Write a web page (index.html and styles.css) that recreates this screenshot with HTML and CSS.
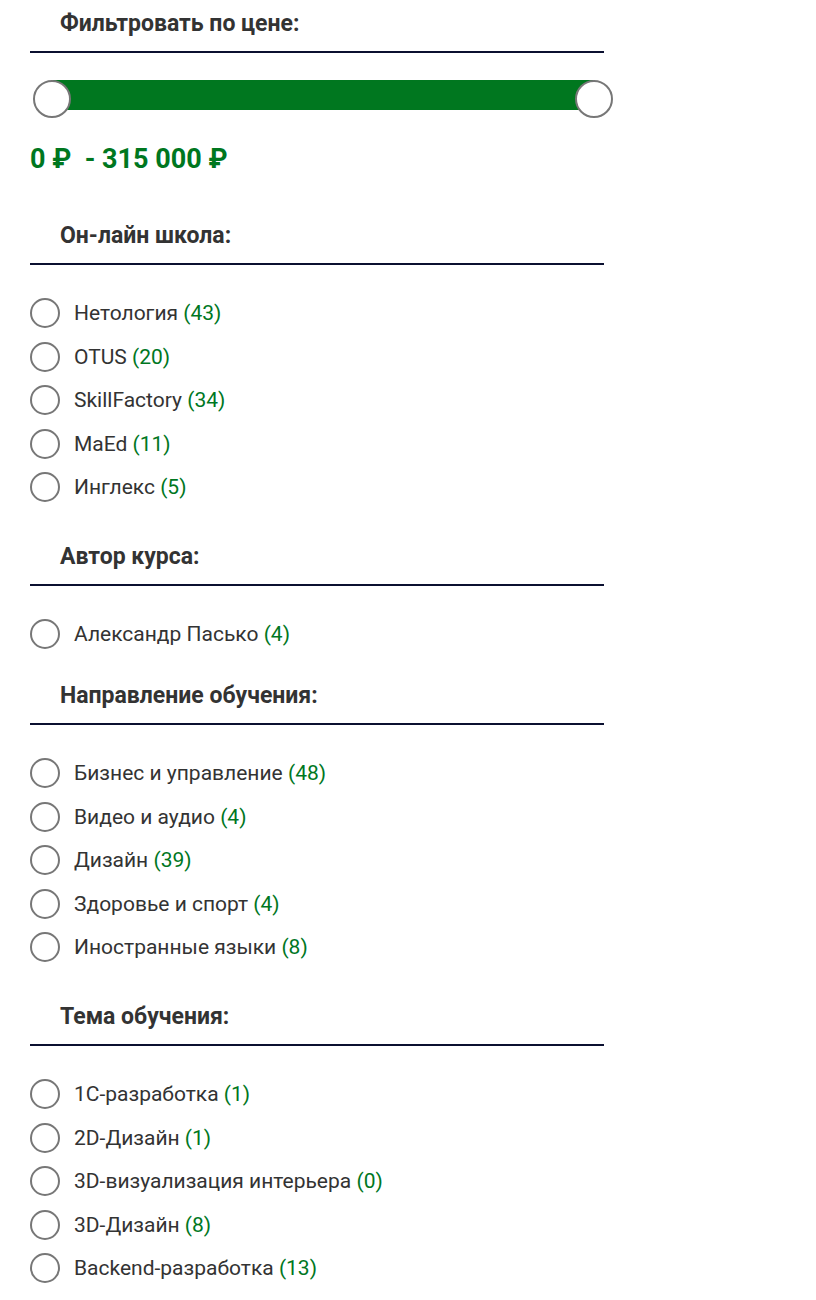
FILE: index.html
```html
<!DOCTYPE html>
<html lang="ru">
<head>
    <meta charset="UTF-8">
    <meta name="viewport" content="width=device-width, initial-scale=1.0">
    <title>Фильтр курсов</title>
    <link rel="stylesheet" href="styles.css">
</head>
<body>
    <div class="filters">
        <div class="filter-group">
            <h3 class="filter-title">Фильтровать по цене:</h3>
            <div class="price-slider">
                <div class="price-bar"></div>
                <span class="price-handle handle-min"></span>
                <span class="price-handle handle-max"></span>
            </div>
            <div class="price-range">0 ₽ &nbsp;- 315 000 ₽</div>
        </div>

        <div class="filter-group group-wide">
            <h3 class="filter-title">Он-лайн школа:</h3>
            <ul class="filter-list">
                <li><span class="radio"></span>Нетология <span class="count">(43)</span></li>
                <li><span class="radio"></span>OTUS <span class="count">(20)</span></li>
                <li><span class="radio"></span>SkillFactory <span class="count">(34)</span></li>
                <li><span class="radio"></span>MaEd <span class="count">(11)</span></li>
                <li><span class="radio"></span>Инглекс <span class="count">(5)</span></li>
            </ul>
        </div>

        <div class="filter-group">
            <h3 class="filter-title">Автор курса:</h3>
            <ul class="filter-list">
                <li><span class="radio"></span>Александр Пасько <span class="count">(4)</span></li>
            </ul>
        </div>

        <div class="filter-group group-near">
            <h3 class="filter-title">Направление обучения:</h3>
            <ul class="filter-list">
                <li><span class="radio"></span>Бизнес и управление <span class="count">(48)</span></li>
                <li><span class="radio"></span>Видео и аудио <span class="count">(4)</span></li>
                <li><span class="radio"></span>Дизайн <span class="count">(39)</span></li>
                <li><span class="radio"></span>Здоровье и спорт <span class="count">(4)</span></li>
                <li><span class="radio"></span>Иностранные языки <span class="count">(8)</span></li>
            </ul>
        </div>

        <div class="filter-group">
            <h3 class="filter-title">Тема обучения:</h3>
            <ul class="filter-list">
                <li><span class="radio"></span>1С-разработка <span class="count">(1)</span></li>
                <li><span class="radio"></span>2D-Дизайн <span class="count">(1)</span></li>
                <li><span class="radio"></span>3D-визуализация интерьера <span class="count">(0)</span></li>
                <li><span class="radio"></span>3D-Дизайн <span class="count">(8)</span></li>
                <li><span class="radio"></span>Backend-разработка <span class="count">(13)</span></li>
            </ul>
        </div>
    </div>
</body>
</html>
```

FILE: styles.css
```css
body {
    margin: 0;
    padding: 0 30px;
    font-family: Roboto, "Liberation Sans", Arial, sans-serif;
    color: #333;
    background-color: #fff;
}
.filters {
    width: 574px;
}
.filter-group {
    margin-top: 43px;
}
.filter-group:first-child {
    margin-top: 12px;
}
.group-wide {
    margin-top: 51px;
}
.group-near {
    margin-top: 35px;
}
.filter-title {
    margin: 0;
    padding: 0 0 15px 30px;
    font-size: 23px;
    line-height: 24px;
    font-weight: 700;
    color: #333;
    border-bottom: 2px solid #0b1030;
}
.price-slider {
    position: relative;
    height: 38px;
    margin-top: 27px;
}
.price-bar {
    margin: 2px 10px 0 22px;
    height: 30px;
    background-color: #00771f;
}
.price-handle {
    position: absolute;
    top: 0;
    width: 34px;
    height: 34px;
    border: 2px solid #777;
    border-radius: 50%;
    background-color: #fff;
}
.handle-min {
    left: 3px;
}
.handle-max {
    left: 545px;
}
.price-range {
    margin-top: 27px;
    font-size: 27px;
    line-height: 28px;
    font-weight: 700;
    color: #00771f;
    white-space: pre;
}
.filter-list {
    list-style: none;
    margin: 33px 0 0;
    padding: 0;
    display: flex;
    flex-direction: column;
    gap: 13.5px;
}
.filter-list li {
    display: flex;
    align-items: center;
    height: 30px;
    font-size: 21px;
    line-height: 24px;
    white-space: pre;
}
.radio {
    flex: none;
    width: 26px;
    height: 26px;
    margin-right: 14px;
    border: 2px solid #777;
    border-radius: 50%;
    background-color: #fff;
}
.count {
    color: #00771f;
}
```
